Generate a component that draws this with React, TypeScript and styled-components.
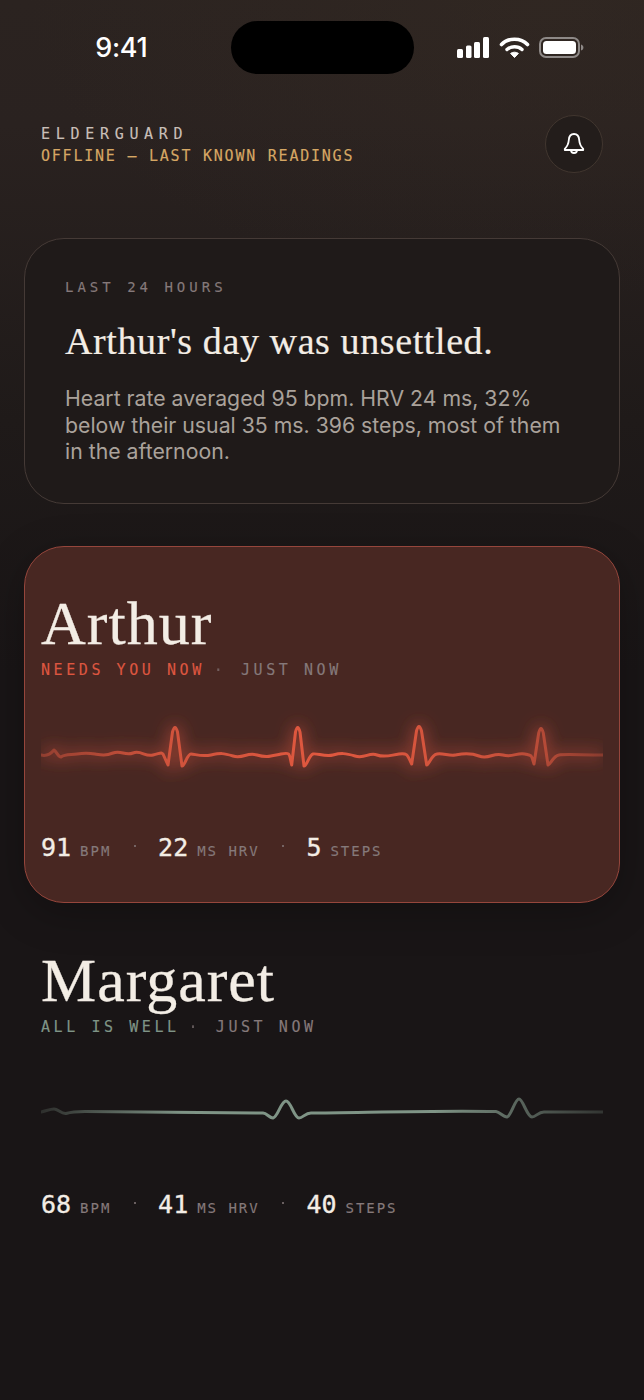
import { Fragment } from "react";
import styled, { createGlobalStyle } from "styled-components";

const GlobalStyle = createGlobalStyle`
  html, body {
    margin: 0;
    padding: 0;
    background: #191516;
  }
  * {
    box-sizing: border-box;
  }
`;

const MONO = `"DejaVu Sans Mono", "Liberation Mono", monospace`;
const SERIF = `"Liberation Serif", "DejaVu Serif", serif`;
const SANS = `Inter, "Noto Sans", sans-serif`;

const Screen = styled.div`
  width: 644px;
  height: 1400px;
  overflow: hidden;
  background:
    radial-gradient(520px 300px at 85% 0%, rgba(60, 48, 38, 0.3), transparent),
    linear-gradient(180deg, #2b2320 0%, #2a2220 9%, #1f1a19 30%, #191516 48%, #191516 100%);
  font-family: ${SANS};
`;

const StatusBar = styled.div`
  display: grid;
  grid-template-columns: 1fr 183px 1fr;
  height: 74px;
  padding-top: 21px;
`;
const Time = styled.div`
  display: flex;
  justify-content: flex-end;
  align-items: center;
  padding-right: 83px;
  color: #fff;
  font-size: 27px;
  font-weight: 500;
  letter-spacing: -0.3px;
  height: 53px;
`;
const Island = styled.div`
  height: 53px;
  background: #000;
  border-radius: 27px;
`;
const StatusIcons = styled.div`
  display: flex;
  align-items: center;
  justify-content: flex-end;
  height: 53px;
  padding-right: 60px;
`;

const Header = styled.header`
  display: flex;
  justify-content: space-between;
  align-items: center;
  padding: 41px 41px 0;
`;
const Brand = styled.div`
  display: flex;
  flex-direction: column;
  gap: 5px;
  margin-top: 2px;
`;
const BrandName = styled.div`
  font-family: ${MONO};
  font-size: 15px;
  line-height: 17px;
  letter-spacing: 5.7px;
  -webkit-text-stroke: 0.15px #c9bfb8;
  color: #c9bfb8;
`;
const BrandStatus = styled.div`
  font-family: ${MONO};
  font-size: 15px;
  line-height: 17px;
  letter-spacing: 1.77px;
  -webkit-text-stroke: 0.15px #d6a764;
  color: #d6a764;
`;
const BellButton = styled.button`
  width: 58px;
  height: 58px;
  padding: 0;
  display: flex;
  align-items: center;
  justify-content: center;
  color: #fff;
  background: #231d1b;
  border: 1px solid #41362f;
  border-radius: 50%;
`;

const Summary = styled.section`
  margin: 65px 24px 42px;
  height: 266px;
  padding: 39px 40px 0;
  background: #1f1a19;
  border: 1px solid #453a36;
  border-radius: 40px;
`;
const SummaryLabel = styled.div`
  font-family: ${MONO};
  font-size: 14px;
  line-height: 18px;
  letter-spacing: 4px;
  -webkit-text-stroke: 0.15px #85797a;
  color: #85797a;
`;
const SummaryTitle = styled.h1`
  margin: 23px 0 0;
  font-family: ${SERIF};
  font-weight: 400;
  font-size: 38px;
  line-height: 44px;
  letter-spacing: 0.6px;
  -webkit-text-stroke: 0.2px #f3ede5;
  color: #f3ede5;
`;
const SummaryBody = styled.p`
  margin: 22px 0 0;
  font-size: 21.25px;
  line-height: 26.5px;
  color: #aaa29b;
`;

const PersonCard = styled.section<{ $alert?: boolean }>`
  margin: 0 24px;
  height: 357px;
  padding: 41px 16px 0;
  border-radius: 40px;
  background: ${(p) => (p.$alert ? "#482722" : "transparent")};
  border: 1px solid ${(p) => (p.$alert ? "#96463c" : "transparent")};
  box-shadow: ${(p) => (p.$alert ? "0 10px 40px rgba(0, 0, 0, 0.25)" : "none")};
`;
const Name = styled.h2`
  margin: 0;
  font-family: ${SERIF};
  font-weight: 400;
  font-size: 62px;
  line-height: 70px;
  letter-spacing: 1px;
  -webkit-text-stroke: 0.3px #f3ede5;
  color: #f3ede5;
`;
const StatusLine = styled.div`
  display: flex;
  margin-top: 3px;
  font-family: ${MONO};
  font-size: 15px;
  line-height: 18px;
  letter-spacing: 3.57px;
  -webkit-text-stroke: 0.15px currentColor;
  color: #85797a;
`;
const StatusWord = styled.span<{ $tone: "alert" | "calm" }>`
  color: ${(p) => (p.$tone === "alert" ? "#dd5640" : "#7f9486")};
`;
const Separator = styled.span`
  margin: 0 14.6px 0 9px;
  opacity: 0.7;
`;
const Wave = styled.svg`
  display: block;
  width: 562px;
  height: 90px;
  margin-top: 31px;
`;
const Stats = styled.div`
  display: flex;
  align-items: baseline;
  gap: 22.4px;
  margin-top: 33px;
`;
const Stat = styled.div`
  display: flex;
  align-items: baseline;
  gap: 9px;
`;
const StatValue = styled.span`
  font-family: ${MONO};
  font-size: 25px;
  -webkit-text-stroke: 0.35px #f3ede5;
  color: #f3ede5;
`;
const StatUnit = styled.span`
  font-family: ${MONO};
  font-size: 14px;
  letter-spacing: 1.97px;
  -webkit-text-stroke: 0.15px #85797a;
  color: #85797a;
`;
const StatDot = styled.span`
  width: 2px;
  height: 2px;
  border-radius: 50%;
  background: #85797a;
  align-self: center;
  margin-top: -4px;
`;

const ARTHUR_PATH =
  "M0 45 C4 46 8 46 13 40 C16 42 17 47 20 47 C24 44 30 45 36 44 S48 43 54 44 S64 46 72 43 S84 46 92 43 S104 47 112 45 S120 42 122 44 L127 55 L131.5 22 Q134 13 136.5 22 L141 56 C144 56 146 44 150 44 S160 47 170 45 S182 43 192 46 S206 42 216 45 S230 46 240 44 S248 44 250.7 55 L254.5 22 Q256.7 13 259 22 L263 56 C266 56 268 45 272 44 S284 47 292 45 S304 43 314 46 S328 42 336 45 S350 45 358 44 S366 44 370.7 54 L375.5 21 Q378 12 380.5 21 L385.7 55 C388 55 390 45 396 44 S408 46 414 45 S428 42 438 46 S452 42 462 45 S476 42 484 44 S490 45 493 54 L497.7 23 Q500 14 502.3 23 L507 55 C510 54 512 46 518 45 S540 45 562 45";
const MARGARET_PATH =
  "M0 45 C5 44 9 42 13 42 C17 42 20 47 25 46.5 C30 45 36 44.5 44 44.5 C90 44.5 180 46 222 46 C226 46 228 51 232 51 C237 50 240 34 245 34 C250 34 253 51 258 51 C262 51 264 46 270 46 C310 46 400 43 455 44.5 C459 45 462 50 466 50 C470 49 474 32 478 32 C482 32 486 50 491 50 C495 50 497 45 503 45 C520 45 540 45 562 45";

type Reading = { value: number; unit: string };

const Readings = ({ items }: { items: Reading[] }) => (
  <Stats>
    {items.map((item, i) => (
      <Fragment key={item.unit}>
        {i > 0 && <StatDot />}
        <Stat>
          <StatValue>{item.value}</StatValue>
          <StatUnit>{item.unit}</StatUnit>
        </Stat>
      </Fragment>
    ))}
  </Stats>
);

const App = () => {
  return (
    <Screen>
      <GlobalStyle />
      <StatusBar>
        <Time>9:41</Time>
        <Island />
        <StatusIcons>
          <svg width="128" height="22" viewBox="0 0 128 22" fill="none">
            <rect x="1" y="12" width="6" height="9" rx="1.5" fill="#fff" />
            <rect x="10" y="8.5" width="5.5" height="12.5" rx="1.5" fill="#fff" />
            <rect x="18" y="5" width="6" height="16" rx="1.5" fill="#fff" />
            <rect x="27" y="0" width="6" height="21" rx="1.5" fill="#fff" />
            <path d="M45.5 7.5 C52 0.5 65 0.5 71.5 7.5" stroke="#fff" strokeWidth="3.6" strokeLinecap="round" />
            <path d="M51 12.5 C55 8.8 62 8.8 66 12.5" stroke="#fff" strokeWidth="3.4" strokeLinecap="round" />
            <path d="M58.5 20.5 L54.6 16.4 C56.8 14.8 60.2 14.8 62.4 16.4 Z" fill="#fff" stroke="#fff" strokeLinejoin="round" />
            <rect x="84" y="1" width="39" height="19" rx="6" stroke="#8e8987" strokeWidth="2" />
            <rect x="87" y="4" width="33" height="13" rx="3.5" fill="#fff" />
            <path d="M125 7.5 C126.6 8 127.4 9 127.4 10.5 C127.4 12 126.6 13 125 13.5 Z" fill="#8e8987" />
          </svg>
        </StatusIcons>
      </StatusBar>

      <Header>
        <Brand>
          <BrandName>ELDERGUARD</BrandName>
          <BrandStatus>OFFLINE — LAST KNOWN READINGS</BrandStatus>
        </Brand>
        <BellButton aria-label="Alerts">
          <svg width="24" height="24" viewBox="0 0 24 24" fill="none" stroke="currentColor" strokeWidth="1.8" strokeLinejoin="round" strokeLinecap="round">
            <path d="M12 2 C8.5 2 7 4.6 6.8 8 C6.5 12.2 5.5 14.2 2.8 16.8 L2.8 18 H21.2 V16.8 C18.5 14.2 17.5 12.2 17.2 8 C17 4.6 15.5 2 12 2 Z" />
            <path d="M9 18 A3 3 0 0 0 15 18" />
          </svg>
        </BellButton>
      </Header>

      <Summary>
        <SummaryLabel>LAST 24 HOURS</SummaryLabel>
        <SummaryTitle>Arthur's day was unsettled.</SummaryTitle>
        <SummaryBody>
          Heart rate averaged 95 bpm. HRV 24 ms, 32% below their usual 35 ms.
          396 steps, most of them in the afternoon.
        </SummaryBody>
      </Summary>

      <PersonCard $alert>
        <Name>Arthur</Name>
        <StatusLine>
          <StatusWord $tone="alert">NEEDS YOU NOW</StatusWord>
          <Separator>·</Separator>
          <span>JUST NOW</span>
        </StatusLine>
        <Wave viewBox="0 0 562 90" fill="none">
          <defs>
            <linearGradient id="arthurStroke" x1="0" x2="562" y1="0" y2="0" gradientUnits="userSpaceOnUse">
              <stop offset="0" stopColor="#e0583f" stopOpacity="0.4" />
              <stop offset="0.2" stopColor="#e0583f" stopOpacity="0.85" />
              <stop offset="0.5" stopColor="#e0583f" />
              <stop offset="0.8" stopColor="#e0583f" stopOpacity="0.85" />
              <stop offset="1" stopColor="#e0583f" stopOpacity="0.35" />
            </linearGradient>
            <filter id="arthurGlow" x="-5%" y="-40%" width="110%" height="180%">
              <feGaussianBlur stdDeviation="8" />
            </filter>
          </defs>
          <path d={ARTHUR_PATH} stroke="#e0583f" strokeOpacity="0.5" strokeWidth="7" filter="url(#arthurGlow)" />
          <path d={ARTHUR_PATH} stroke="url(#arthurStroke)" strokeWidth="3" strokeLinecap="round" strokeLinejoin="round" />
        </Wave>
        <Readings
          items={[
            { value: 91, unit: "BPM" },
            { value: 22, unit: "MS HRV" },
            { value: 5, unit: "STEPS" },
          ]}
        />
      </PersonCard>

      <PersonCard>
        <Name>Margaret</Name>
        <StatusLine>
          <StatusWord $tone="calm">ALL IS WELL</StatusWord>
          <Separator>·</Separator>
          <span>JUST NOW</span>
        </StatusLine>
        <Wave viewBox="0 0 562 90" fill="none">
          <defs>
            <linearGradient id="margaretStroke" x1="0" x2="562" y1="0" y2="0" gradientUnits="userSpaceOnUse">
              <stop offset="0" stopColor="#7f9486" stopOpacity="0.2" />
              <stop offset="0.25" stopColor="#7f9486" />
              <stop offset="0.7" stopColor="#7f9486" />
              <stop offset="1" stopColor="#7f9486" stopOpacity="0.25" />
            </linearGradient>
          </defs>
          <path d={MARGARET_PATH} stroke="url(#margaretStroke)" strokeWidth="3" strokeLinecap="round" strokeLinejoin="round" />
        </Wave>
        <Readings
          items={[
            { value: 68, unit: "BPM" },
            { value: 41, unit: "MS HRV" },
            { value: 40, unit: "STEPS" },
          ]}
        />
      </PersonCard>
    </Screen>
  );
};

export default App;
